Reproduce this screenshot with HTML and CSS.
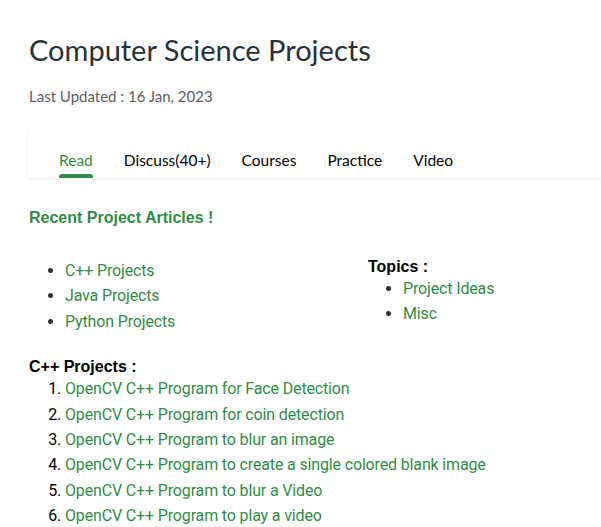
FILE: index.html
```html
<!DOCTYPE html>
<html>
<head>
<meta charset="utf-8">
<link rel="stylesheet" href="styles.css">
</head>
<body>
<div class="page">
  <h1 class="title">Computer Science Projects</h1>
  <div class="updated">Last Updated : 16 Jan, 2023</div>
  <nav class="tabs">
    <span class="tab active">Read</span>
    <span class="tab">Discuss(40+)</span>
    <span class="tab">Courses</span>
    <span class="tab">Practice</span>
    <span class="tab">Video</span>
  </nav>
  <h2 class="recent">Recent Project Articles !</h2>
  <div class="cols">
    <ul class="list left">
      <li><a>C++ Projects</a></li>
      <li><a>Java Projects</a></li>
      <li><a>Python Projects</a></li>
    </ul>
    <div class="topics">
      <div class="label">Topics :</div>
      <ul class="list">
        <li><a>Project Ideas</a></li>
        <li><a>Misc</a></li>
      </ul>
    </div>
  </div>
  <div class="label cpp">C++ Projects :</div>
  <ol class="list olist">
    <li><a>OpenCV C++ Program for Face Detection</a></li>
    <li><a>OpenCV C++ Program for coin detection</a></li>
    <li><a>OpenCV C++ Program to blur an image</a></li>
    <li><a>OpenCV C++ Program to create a single colored blank image</a></li>
    <li><a>OpenCV C++ Program to blur a Video</a></li>
    <li><a>OpenCV C++ Program to play a video</a></li>
  </ol>
</div>
</body>
</html>
```
FILE: styles.css
```css
html, body {
  margin: 0;
  padding: 0;
  background: #ffffff;
  overflow: hidden;
}
.page {
  padding: 30px 0 0 29px;
  font-family: "Roboto", "Liberation Sans", sans-serif;
  color: #273239;
}
.title {
  margin: 0;
  font-family: "Lato", "Noto Sans", sans-serif;
  font-weight: 400;
  font-size: 29px;
  line-height: 40px;
  color: #273239;
}
.updated {
  margin-top: 16px;
  font-family: "Lato", "Noto Sans", sans-serif;
  font-size: 15px;
  line-height: 20px;
  color: #5d5d5d;
}
.tabs {
  margin-top: 24px;
  margin-left: -1px;
  height: 48px;
  display: flex;
  align-items: center;
  padding-left: 31px;
  box-shadow: 0 1px 3px rgba(0,0,0,0.08);
  border-radius: 2px;
  font-family: "Lato", "Noto Sans", sans-serif;
  font-size: 15.5px;
}
.tab {
  position: relative;
  color: #000;
  margin-right: 31px;
  line-height: 20px;
  padding-top: 12px;
}
.tab.active {
  color: #2f8d46;
}
.tab.active::after {
  content: "";
  position: absolute;
  left: 0;
  right: 0;
  bottom: -8px;
  height: 4px;
  background: #2f8d46;
  border-radius: 3px 3px 0 0;
}
.recent {
  margin: 30px 0 0 0;
  font-family: "Liberation Sans", Arial, sans-serif;
  font-weight: 700;
  font-size: 16px;
  line-height: 20px;
  color: #2f8d46;
}
.cols {
  display: flex;
  margin-top: 30px;
}
.list {
  margin: 0;
  padding-left: 36px;
  font-size: 16px;
  letter-spacing: -0.15px;
  line-height: 25.4px;
}
.list a {
  color: #2f8d46;
}
.left {
  width: 303px;
}
.topics {
  margin-top: -1px;
}
.label {
  font-family: "Liberation Sans", Arial, sans-serif;
  font-weight: 700;
  font-size: 16px;
  line-height: 19px;
  color: #000;
}
.topics .list {
  padding-left: 35px;
}
.cpp {
  margin-top: 23px;
}
.olist {
  color: #000;
}
```
